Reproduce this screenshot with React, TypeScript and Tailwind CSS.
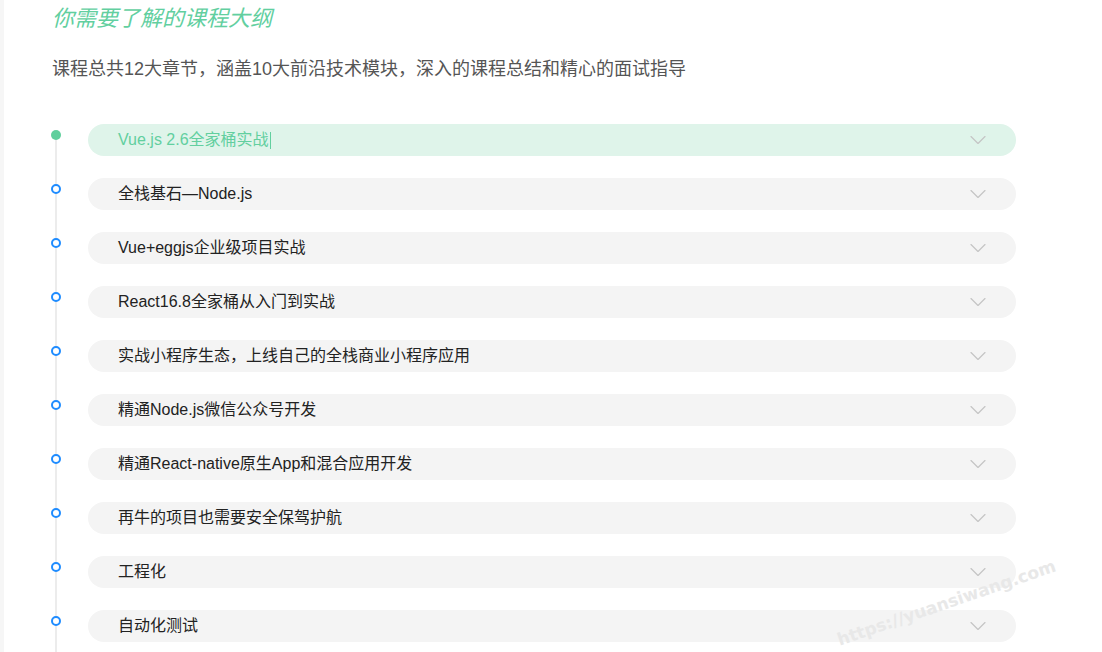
import { ChevronDown } from 'lucide-react';

const CHAPTERS = [
  'Vue.js 2.6全家桶实战',
  '全栈基石—Node.js',
  'Vue+eggjs企业级项目实战',
  'React16.8全家桶从入门到实战',
  '实战小程序生态，上线自己的全栈商业小程序应用',
  '精通Node.js微信公众号开发',
  '精通React-native原生App和混合应用开发',
  '再牛的项目也需要安全保驾护航',
  '工程化',
  '自动化测试',
];

export default function App() {
  return (
    <div
      className="relative h-[652px] w-[1102px] overflow-hidden bg-white"
      style={{ fontFamily: '"Liberation Sans", Arial, "Noto Sans CJK SC", sans-serif' }}
    >
      <div className="flex h-full">
        <div className="w-[4px] shrink-0 bg-[#f6f6f6]" />
        <div className="flex-1 pl-[48px]">
          <h2 className="mt-[4px] text-[22px] italic leading-[30px] text-[#62cf9f]">你需要了解的课程大纲</h2>
          <p className="mt-[23px] text-[18px] leading-[24px] text-[#555]">
            课程总共12大章节，涵盖10大前沿技术模块，深入的课程总结和精心的面试指导
          </p>

          <div className="relative mt-[43px] w-[964px]">
            <div className="absolute left-[3px] top-[10px] bottom-[-40px] w-[2px] bg-[#ececec]" />
            <ul className="flex flex-col gap-[22px]">
              {CHAPTERS.map((title, i) => {
                const active = i === 0;
                return (
                  <li key={title} className="relative flex items-center">
                    <span
                      className={
                        active
                          ? 'absolute left-[-1px] top-[6px] h-[10px] w-[10px] rounded-full bg-[#5fcf9c]'
                          : 'absolute left-[-1px] top-[6px] h-[10px] w-[10px] rounded-full border-2 border-[#1f8cff] bg-white'
                      }
                    />
                    <div
                      className={`ml-[36px] flex h-[32px] flex-1 items-center justify-between rounded-full pl-[30px] pr-[24px] text-[16px] ${
                        active ? 'bg-[#dff4ea] text-[#62cf9f]' : 'bg-[#f4f4f4] text-[#222]'
                      }`}
                    >
                      <span className="flex items-center">
                        {title}
                        {active && <span className="ml-[1px] inline-block h-[17px] w-[1px] bg-[#62cf9f]" />}
                      </span>
                      <ChevronDown size={28} strokeWidth={1} className="text-[#c4c4c4]" />
                    </div>
                  </li>
                );
              })}
            </ul>
          </div>
        </div>
      </div>

      <div
        className="pointer-events-none absolute left-[838px] top-[628px] origin-left -rotate-[19deg] text-[17px] font-bold text-[#e8e8e8]"
        style={{ fontFamily: '"DejaVu Sans", sans-serif' }}
      >
        https://yuansiwang.com
      </div>
    </div>
  );
}
